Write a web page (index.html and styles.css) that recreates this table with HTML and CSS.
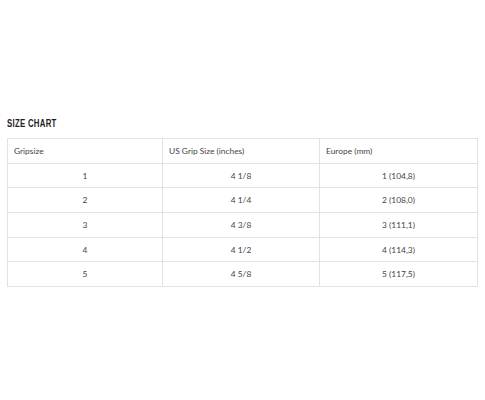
FILE: index.html
```html
<!DOCTYPE html>
<html>
<head>
<meta charset="utf-8">
<link rel="stylesheet" href="styles.css">
</head>
<body>
<div class="page">
  <h2 class="title">SIZE CHART</h2>
  <table class="chart">
    <thead>
      <tr><th>Gripsize</th><th>US Grip Size (inches)</th><th>Europe (mm)</th></tr>
    </thead>
    <tbody>
      <tr><td>1</td><td>4 1/8</td><td>1 (104,8)</td></tr>
      <tr><td>2</td><td>4 1/4</td><td>2 (108,0)</td></tr>
      <tr><td>3</td><td>4 3/8</td><td>3 (111,1)</td></tr>
      <tr><td>4</td><td>4 1/2</td><td>4 (114,3)</td></tr>
      <tr><td>5</td><td>4 5/8</td><td>5 (117,5)</td></tr>
    </tbody>
  </table>
</div>
</body>
</html>
```
FILE: styles.css
```css
html, body {
  margin: 0;
  padding: 0;
  background: #fff;
}
.page {
  padding: 117px 7px 0 7px;
}
.title {
  display: block;
  width: max-content;
  margin: 0 0 8px 0;
  font-family: "Liberation Sans", Arial, sans-serif;
  font-weight: bold;
  font-size: 11.5px;
  line-height: 13px;
  color: #1e1e1e;
  letter-spacing: 0.4px;
  transform: scaleX(0.68);
  transform-origin: left center;
}
.chart {
  width: 471px;
  border-collapse: collapse;
  font-family: "Lato", "Open Sans", sans-serif;
  font-size: 8.4px;
  color: #444;
  table-layout: fixed;
}
.chart th, .chart td {
  border: 1px solid #e2e2e2;
  height: 23.7px;
  padding: 0 6px;
  font-weight: normal;
}
.chart th {
  text-align: left;
}
.chart td {
  text-align: center;
}
.chart th:nth-child(1) { width: 142px; }
.chart th:nth-child(2) { width: 144px; }
```
